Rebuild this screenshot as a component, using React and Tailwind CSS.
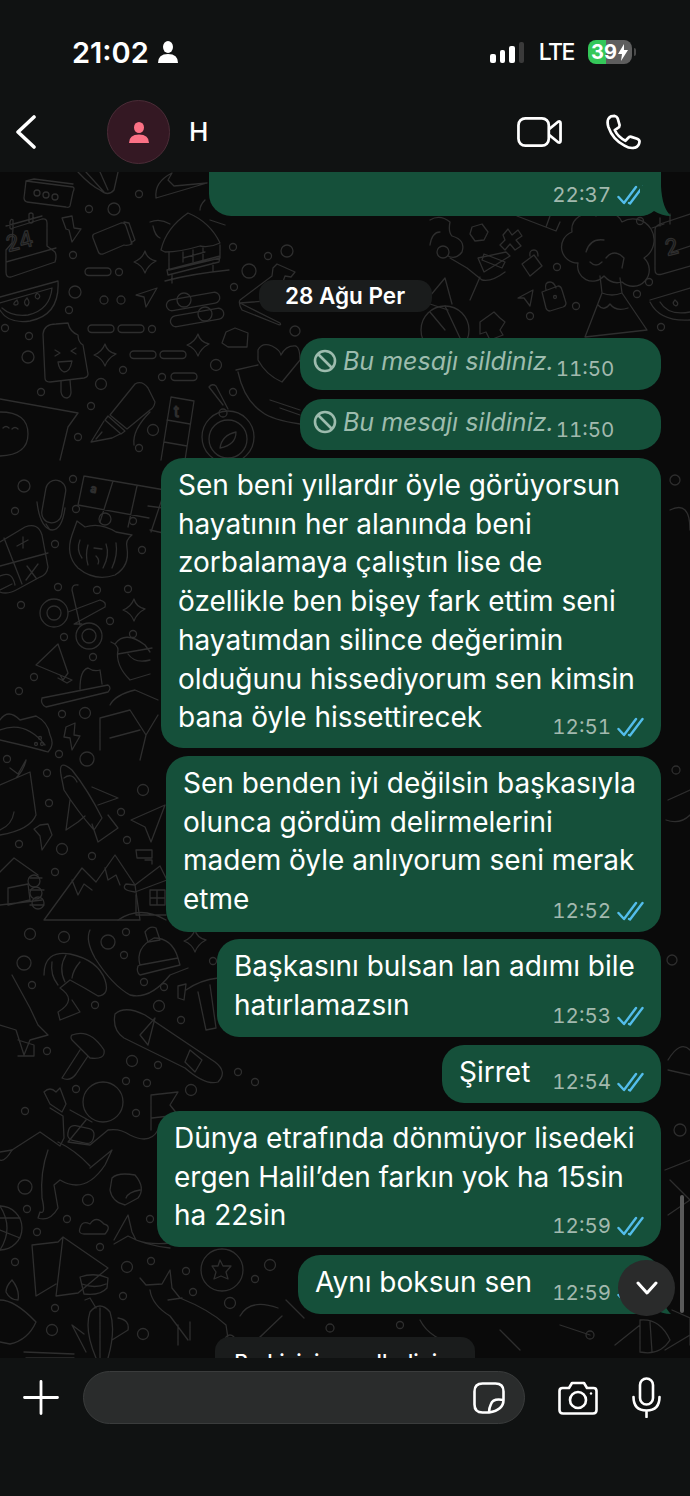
import React from 'react';

const font = { fontFamily: 'Inter, "Liberation Sans", sans-serif' };

// small rings scattered over the wallpaper: [cx, cy, r]
const rings = [
  [139, 194, 3.5], [89, 209, 3.5], [114, 209, 6], [73, 255, 3.5], [119, 272, 3.5], [233, 247, 3.5],
  [268, 256, 3.5], [287, 251, 6], [249, 271, 7], [234, 287, 3.5], [75, 292, 6], [104, 300, 4], [121, 300, 4],
  [69, 310, 3.5], [5, 328, 3.5], [29, 336, 3.5], [28, 357, 6], [152, 329, 3.5], [123, 370, 3.5], [216, 365, 5.5],
  [162, 377, 3.5], [101, 384, 5.5], [41, 392, 3.5], [233, 392, 3.5], [91, 406, 3.5], [78, 437, 3.5], [153, 430, 5.5],
  [139, 448, 3.5], [295, 331, 5], [24, 486, 6], [73, 479, 3.5], [15, 511, 3.5], [76, 509, 3.5], [105, 519, 6],
  [133, 521, 3.5], [55, 544, 3.5], [142, 550, 3.5], [58, 587, 3.5], [97, 590, 3.5], [128, 589, 3.5], [21, 605, 3.5],
  [110, 621, 3.5], [64, 637, 3.5], [133, 634, 3.5], [93, 657, 3.5], [34, 677, 3.5], [19, 691, 3.5], [62, 714, 3.5],
  [85, 713, 5.5], [59, 754, 3.5], [87, 759, 7], [7, 759, 3.5], [47, 773, 3.5], [143, 790, 5.5], [49, 803, 3.5],
  [121, 812, 3.5], [127, 840, 3.5], [19, 844, 3.5], [62, 849, 5.5], [92, 856, 3.5], [55, 872, 3.5], [30, 934, 5.5],
  [64, 937, 5.5], [108, 942, 7], [126, 932, 3.5], [124, 955, 3.5], [24, 963, 7], [32, 985, 3.5], [144, 982, 3.5],
  [164, 987, 3.5], [95, 1005, 3.5], [159, 1006, 5.5], [181, 1020, 3.5], [213, 961, 3.5], [47, 1051, 3.5],
  [132, 1061, 5.5], [158, 1065, 3.5], [238, 1072, 3.5], [126, 1081, 3.5], [147, 1083, 3.5], [255, 1082, 3.5],
  [191, 1090, 5.5], [76, 1089, 3.5], [25, 1111, 3.5], [136, 1113, 3.5], [25, 1187, 7], [88, 1200, 5.5], [27, 1209, 3.5],
  [67, 1219, 3.5], [150, 1219, 3.5], [37, 1232, 3.5], [100, 1247, 3.5], [15, 1262, 3.5], [127, 1267, 5.5],
  [151, 1261, 3.5], [186, 1271, 3.5], [255, 1279, 3.5], [270, 1265, 5.5], [193, 1292, 3.5], [230, 1303, 5.5],
  [123, 1296, 3.5], [55, 1308, 3.5], [52, 1330, 5.5], [143, 1334, 5.5], [640, 221, 3.5], [557, 267, 3.5], [576, 306, 3.5],
  [530, 316, 3.5], [649, 282, 3.5], [637, 294, 3.5], [661, 327, 3.5], [675, 480, 5], [672, 960, 5],
  [680, 1130, 6], [676, 770, 4], [230, 1340, 5], [400, 1325, 3.5], [590, 1335, 4], [330, 1328, 4],
];

// short rounded dashes: [x, y, width]
const dashes = [
  [85, 268, 26], [88, 325, 26], [118, 325, 26], [130, 351, 26], [160, 351, 26], [171, 373, 26],
];

const sparkles = [[145, 262], [105, 355], [198, 345], [134, 610], [195, 941]];

function Sparkle({ x, y }) {
  return <path d={`M${x} ${y - 11} Q${x + 2} ${y - 3} ${x + 11} ${y - 1} Q${x + 3} ${y + 3} ${x} ${y + 11} Q${x - 3} ${y + 3} ${x - 11} ${y} Q${x - 3} ${y - 3} ${x} ${y - 11}Z`} />;
}

function Wallpaper() {
  return (
    <svg className="absolute inset-0 h-full w-full" viewBox="0 172 690 1186" fill="none" stroke="#2e2e2e" strokeWidth="1.3" strokeLinecap="round" strokeLinejoin="round">
      {rings.map(([cx, cy, r], i) => <circle key={i} cx={cx} cy={cy} r={r} />)}
      {dashes.map(([x, y, w], i) => <rect key={i} x={x} y={y} width={w} height="7.5" rx="3.7" />)}
      {sparkles.map(([x, y], i) => <Sparkle key={i} x={x} y={y} />)}

      {/* keypad box, top leaf, wave */}
      <path d="M26 181 L73 187 Q75 188 73 192 L70 206 Q69 208 66 207 L27 202 Q24 201 24 198 Z M26 181 L34 179 L73 184" />
      <circle cx="37" cy="193" r="3" /><circle cx="46" cy="195" r="3" /><circle cx="55" cy="197" r="3" />
      <path d="M78 172 Q90 185 100 190 Q108 197 114 190 L118 172 M86 172 L104 192 M100 172 L108 190" />
      <path d="M156 198 Q154 182 172 173 L168 180 L174 186 L207 183 M156 198 L207 183" />
      {/* calendar */}
      <path d="M13 228 L42 219 Q47 218 47 223 L47 246 L55 252 Q57 256 55 262 L11 277 Q6 278 6 272 L6 250 L12 243 Z M6 262 L56 248" />
      <path d="M6 226 L42 216 M10 222 V228 Q11 230 13 228 V220 Q11 218 10 222 M29 214 V222 Q31 224 33 222 V214 Q31 212 29 214" />
      <text x="8" y="252" fill="none" stroke="#2e2e2e" fontSize="22" fontFamily="Inter" transform="rotate(-14 8 252)">24</text>
      {/* bolt, jar, plane */}
      <path d="M62 218 L72 216 L74 228 L81 229 L72 242 L69 230 L66 229 Z" />
      <path d="M94 234 L121 223 Q125 222 126 226 L132 244 Q127 246 124 245 L103 254 Q99 255 98 251 L93 238 Q92 235 94 234 Z M124 222 L129 223 L135 240 L131 243" />
      <path d="M136 295 L157 288 L146 307 L144 297 Z" />
      {/* hut */}
      <path d="M161 250 Q166 228 188 213 Q210 222 220 243 Q210 248 200 246 Q180 252 165 252 Z" />
      <path d="M169 252 V270 L220 258 V245 M167 270 L220 256 L219 262 L168 275 Z M172 275 V283 M213 263 V271 M165 281 Q190 274 229 270" />
      <path d="M183 252 V262 M193 250 V262 M203 248 V260 M183 258 L205 252" />
      <path d="M150 222 Q160 218 170 224 M153 226 Q155 236 160 238 M200 210 Q200 205 205 200 M210 220 L225 225" />
      {/* sliders */}
      <rect x="166" y="296" width="54" height="11" rx="5.5" transform="rotate(-10 193 301)" />
      <rect x="170" y="312" width="54" height="11" rx="5.5" transform="rotate(-10 197 317)" />
      <circle cx="184" cy="300" r="7" /><circle cx="205" cy="314" r="7" />
      {/* watermelon */}
      <path d="M0 297 L58 281 Q60 315 30 321 Q8 324 0 310 M0 303 L52 288 Q50 310 28 315 Q12 317 2 308" />
      <path d="M17 300 Q12 304 15 305 Q20 305 17 300 M27 298 Q22 303 27 306 Q31 303 27 298 M37 293 Q33 298 38 299 Q42 296 37 293" />
      {/* popsicle */}
      <path d="M43 334 Q44 324 56 324 L68 323 Q70 332 78 335 Q78 342 83 345 L88 374 Q88 377 84 378 L50 382 Q45 382 45 378 Z" />
      <path d="M61 381 V392 Q62 398 67 398 Q71 397 71 392 L70 380 M55 350 L60 353 L55 356 M76 348 L71 351 L76 354 M58 362 L72 361 Q70 372 64 372 Q59 370 58 362" />
      {/* pen */}
      <path d="M110 415 L135 384 Q142 380 148 388 L155 402 Q154 408 150 410 L127 429 Z M108 416 L125 431 L121 434 L105 420 Z M104 421 L91 442 L112 438 L120 434 M96 439 L102 432 M134 445 Q132 430 150 412" />
      {/* ruler, compass */}
      <path d="M171 397 L194 401 L185 460 M171 397 L161 460 M167 420 L190 424 M164 442 L187 446" />
      <text x="174" y="417" fill="none" stroke="#2e2e2e" fontSize="15" fontFamily="Inter">t</text>
      <circle cx="228" cy="437" r="26" /><circle cx="228" cy="439" r="19" /><circle cx="223" cy="413" r="4" />
      <path d="M223 405 L209 387 Q212 383 216 386 L228 409 M220 448 Q222 435 236 432 Q236 445 220 448" />
      {/* smiley with hanger */}
      <path d="M0 399 L78 413 L68 427 L60 460 M0 412 Q28 412 28 434 Q28 455 0 456 M3 428 Q6 425 9 428 M12 429 Q15 426 18 429" />
      {/* cone, folder, heart */}
      <path d="M277 264 L295 272 L291 277 L285 276 L280 290 L279 300 L240 303 L280 323 Q282 326 277 324 L242 310 Q238 303 240 300 L272 276 L273 268 Z" />
      <path d="M226 332 L235 328 L248 333 L247 347 L228 347 L222 343 Z" />
      <path d="M258 350 Q262 342 272 346 Q280 350 281 355 Q286 345 296 346 Q300 348 300 360 L282 382 Q266 375 258 360 Z" />
      <path d="M236 370 L258 365 M238 372 Q244 400 262 412 Q272 420 300 424 M270 400 L300 410 M280 408 L300 415" />
      {/* flower tree and volcano, top right */}
      <path d="M596 216 A17 17 0 0 1 622 222 A15 15 0 0 1 644 258 A14 14 0 0 1 622 282 Q612 285 604 276 A15 15 0 0 1 578 263 A16 16 0 0 1 572 232 A16 16 0 0 1 596 216 Z" />
      <path d="M586 252 Q590 238 604 240 M606 258 Q614 248 624 258 L622 268 M590 262 Q596 268 602 262" />
      <path d="M600 276 L602 293 Q612 297 622 293 L620 278 M602 293 L585 337 L647 330 L622 293 M598 305 Q604 312 610 304 Q616 312 628 308" />
      {/* person with phone */}
      <circle cx="443" cy="252" r="6" />
      <path d="M430 220 Q440 214 450 222 Q448 232 452 236 Q466 240 462 252 Q456 260 448 256 M430 245 Q432 232 440 232" />
      <path d="M450 258 L467 268 L482 280 Q492 282 505 272 M470 300 L480 277 M430 296 L445 278 L452 304 M430 304 L448 310 M478 258 L506 252 L510 256 L484 272 Z" />
      <path d="M484 254 L505 262 L502 268 L482 260 Z" />
      <path d="M472 227 L482 224 L488 232 L484 240 L475 241 L470 234 Z" />
      <path d="M503 235 L508 229 L512 235 L518 230 L522 236 L516 240 L521 246 L515 250 L510 244 L505 250 L500 245 L505 240 Z" />
      <path d="M522 264 L534 255 L542 266 L530 276 Z M530 256 Q529 250 534 250 Q538 250 538 256" />
      <path d="M518 298 L533 290 L530 306 L524 298 Z" />
      <path d="M542 292 L558 286 Q561 286 562 290 L566 303 Q566 306 563 307 L550 311 Q547 311 546 308 Z M546 290 Q544 282 550 282 Q554 282 556 288" />
      <circle cx="555" cy="297" r="1.5" />
      <path d="M480 322 L494 312 L500 318 L505 322 L500 330 L503 335 L490 340 L486 332 L480 334 Z" />
      <circle cx="445" cy="330" r="24" /><path d="M445 306 L460 338 M430 312 L445 330" />
      {/* book and corner calendar, melon */}
      <path d="M517 216 L556 231 L560 222 M546 227 L550 216" />
      <path d="M652 228 L664 224 M690 214 L660 224 Q655 226 655 230 L655 270 Q655 276 662 274 L690 266" />
      <path d="M660 218 V226 M670 214 V224 M672 252 L690 246" />
      <text x="667" y="256" fill="none" stroke="#2e2e2e" fontSize="22" fontFamily="Inter" transform="rotate(-14 667 256)">2</text>
      <path d="M650 300 L690 288 M650 302 Q660 322 690 320 M660 302 Q668 316 690 312" />
      <path d="M675 300 Q671 304 676 306 Q680 304 675 300" />
      {/* crossword */}
      <path d="M84 476 L165 490 L151 532 M113 481 L100 522 M137 486 L128 527 M84 476 L78 505 L149 518" />
      <path d="M148 506 L178 510 L172 535 L150 530" />
      <text x="90" y="492" fill="none" stroke="#2e2e2e" fontSize="11" fontFamily="Inter" transform="rotate(10 90 492)">a</text>
      {/* mic, cat */}
      <rect x="44" y="480" width="20" height="43" rx="10" transform="rotate(10 54 500)" />
      <path d="M37 502 Q40 528 52 530 Q62 530 65 508 M50 530 L46 524" />
      <path d="M77 521 L85 527 Q100 522 116 532 L132 535 Q125 540 127 548 Q130 566 115 575 Q95 582 78 568 Q65 555 72 535 Z" />
      <path d="M80 540 Q76 550 82 558 M88 545 Q85 555 88 565 M106 544 Q110 555 103 568 M116 543 Q118 555 112 568 M94 548 L102 549 M96 556 Q100 560 98 564" />
      {/* calculator */}
      <path d="M0 542 L25 527 Q38 522 42 535 L48 567 Q47 575 40 577 L18 589 Q8 595 0 592 M4 538 L22 584 M0 566 L48 553 M17 546 L28 540 M23 537 L23 548 M27 566 L36 578 M38 564 L26 580" />
      <path d="M0 576 Q12 570 15 585 M0 590 L12 584" />
      {/* scissors */}
      <circle cx="54" cy="613" r="14" /><circle cx="54" cy="613" r="7" /><circle cx="89" cy="636" r="13" /><circle cx="89" cy="636" r="7" />
      <path d="M68 612 L100 600 Q107 602 105 607 L74 624 L82 624 M78 585 Q72 584 72 590 L80 625" />
      {/* tube, brush, person */}
      <path d="M36 665 L58 644 L68 673 L63 680 L60 675 Z M60 675 L72 680 L67 683 L58 678" />
      <path d="M42 698 L108 685 Q112 688 108 692 L46 707 Q40 704 42 698 M80 689 Q80 670 88 668 Q94 672 100 670 L102 684" />
      <path d="M111 642 Q118 645 118 650 Q115 665 130 680 L150 674 M115 644 Q125 630 145 645 L150 652 M118 654 L152 648 M128 654 Q135 664 150 660" />
      <path d="M110 705 Q115 695 135 690 L158 700 M100 750 L100 718 L130 710 L146 735 L158 715 M110 738 L140 730 M140 760 L146 735" />
      {/* taco and bolt */}
      <path d="M0 720 Q8 708 20 720 L36 716 Q48 722 50 735 Q55 745 48 752 Q35 748 0 740 M0 730 Q25 720 45 745" />
      <path d="M66 727 L75 723 L74 735 L80 736 L72 750 L70 738 L64 737 Z" />
      <circle cx="40" cy="738" r="1.5" /><circle cx="36" cy="744" r="1.5" /><circle cx="42" cy="744" r="1.5" />
      {/* rocket */}
      <path d="M61 775 Q58 758 72 770 Q88 790 102 818 L94 830 Q78 812 64 790 Z M64 778 Q72 772 77 782 M70 800 L66 830 L78 822 L85 816 M92 787 L118 798 L98 805 M92 824 L98 842 L118 828 L108 815" />
      {/* cheek and basket fragment, plane */}
      <path d="M0 785 L30 772 L36 815 Q30 830 0 835 M0 830 Q12 825 14 812 M16 778 Q24 770 26 760 L18 774 L10 768" />
      <path d="M131 820 L165 805 L151 842 L145 827 Z" />
      <path d="M40 825 L48 824 L52 835 L42 850 L40 836 L34 829 Z" />
      {/* log cabin */}
      <path d="M0 872 L14 858 L38 875 M0 905 L42 900 M8 888 L28 884 L30 900 L8 905 Z M30 878 H42 M30 890 H44 M30 905 H44" />
      <circle cx="34" cy="881" r="6" /><circle cx="36" cy="893" r="6" /><circle cx="38" cy="903" r="6" />
      {/* mountains and house */}
      <path d="M44 920 L82 868 L96 882 L115 855 L135 885 L140 920 Z M72 880 L78 895 L84 884 L92 890 M105 868 L108 880 L116 875 L120 885" />
      <path d="M135 885 L160 866 L167 880 L135 892 Q120 890 126 884 Z M145 860 H152 V864 M137 858 H152 V850 H136 Z" />
      <path d="M136 895 V915 L166 915 M150 890 L165 890 V905 H150 Z M157 890 V905 M150 898 H165 M118 920 Q140 905 166 920" />
      {/* shrimp, beanie, snake line */}
      <path d="M44 975 Q44 950 70 954 Q98 960 105 980 Q110 995 98 996 Q85 988 70 980 L60 988 Q78 1000 58 1012 L60 1020 L80 1012 L72 1000" />
      <path d="M66 955 Q58 968 65 982 M52 962 Q50 975 58 985 M80 962 Q73 970 72 978" />
      <path d="M90 930 Q85 940 95 958 Q112 985 130 995 Q150 1000 170 975 L188 968" />
      <path d="M140 965 Q135 948 154 938 Q172 938 178 958 L180 965 L140 975 Q136 972 138 966 Z M140 965 L178 958" />
      <path d="M145 932 Q150 925 156 928 L160 940 L148 942 Z" />
      {/* hammer and snowboard */}
      <path d="M178 986 L186 984 L184 1000 L178 998 Z M186 990 Q200 980 218 978 M198 992 L206 1030 L216 1028 L210 985" />
      <path d="M115 1014 Q125 1005 145 1015 L215 1062 Q228 1072 218 1082 Q206 1086 185 1068 L124 1038 Q112 1030 115 1014 Z" />
      <path d="M140 1035 L155 1018 L148 1045 Z M190 1050 L202 1060 L195 1072 L185 1062 Z" />
      {/* tree, mushroom */}
      <path d="M12 975 L30 1008 L38 1025 L48 1035 L30 1040 L24 1055 L16 1030 L0 1025 M18 1040 L34 1045 L34 1056 L18 1056" />
      <path d="M72 1035 Q90 1028 104 1050 Q106 1060 90 1058 L72 1040 Q70 1037 72 1035 M80 1050 L62 1078 Q70 1082 76 1074 L88 1056" />
      {/* astronaut */}
      <circle cx="103" cy="1102" r="20" />
      <path d="M44 1092 Q50 1086 56 1092 L60 1088 L63 1096 L66 1104 L62 1112 L50 1104 Z M50 1108 L63 1116 L64 1138 L60 1146 L40 1132 L12 1150 L0 1152" />
      <path d="M86 1120 L68 1142 L90 1145 L108 1130 Q120 1128 130 1135 Q150 1145 158 1130 M92 1122 L70 1110" />
      <rect x="68" y="1127" width="26" height="15" rx="6" transform="rotate(12 81 1134)" />
      <path d="M48 1150 Q40 1172 42 1198 Q46 1215 40 1212 L38 1218 Q50 1222 58 1208 L54 1185 L60 1180 Q85 1195 105 1165 L112 1150 L90 1168" />
      <path d="M12 1150 Q5 1162 0 1160 M58 1142 Q75 1150 90 1166" />
      {/* flag, diaper, globe */}
      <path d="M151 1130 V1095 L178 1092 L170 1105 L178 1115 L152 1118" />
      <path d="M112 1178 Q118 1172 135 1175 Q146 1188 138 1198 L125 1205 Q112 1202 110 1190 Z M126 1198 Q128 1192 140 1190" />
      <circle cx="0" cy="1228" r="22" /><path d="M0 1206 Q14 1228 0 1250 M-15 1218 L20 1218 M0 1230 L20 1238" />
      {/* whale tail, cloud, cone */}
      <path d="M114 1240 L128 1215 L132 1232 L136 1240 Q150 1245 170 1243 M114 1244 L128 1236 Q144 1245 170 1248" />
      <path d="M80 1228 Q82 1220 90 1224 Q96 1215 104 1224 Q112 1226 105 1234 H84 Q78 1234 80 1228 Z" />
      <path d="M32 1245 L58 1242 L63 1237 L108 1268 L78 1293 L56 1296 L63 1237 M32 1245 L36 1296 L56 1284" />
      <path d="M80 1277 Q95 1272 108 1278 L107 1288 Q100 1296 84 1294 Z M82 1284 Q95 1289 106 1284" />
      {/* star coin, fox, cactus, candle */}
      <circle cx="222" cy="1270" r="21" /><path d="M220 1260 L223 1266 L231 1266 L226 1272 L228 1279 L221 1276 L214 1279 L216 1272 L212 1266 L218 1266 Z" />
      <path d="M140 1278 L146 1285 L162 1284 L170 1270 L172 1288 L180 1298 Q210 1310 226 1325 L229 1345 M150 1290 Q152 1305 170 1316 L188 1340 M168 1300 L182 1298 M178 1325 L178 1345 M190 1322 V1340" />
      <path d="M0 1300 Q15 1300 36 1322 Q28 1340 10 1344 L0 1342 M12 1280 Q20 1290 18 1300 Q10 1300 6 1292 Q6 1286 12 1280" />
      <path d="M85 1300 L90 1298 L96 1308 M96 1358 Q84 1330 90 1312 Q100 1300 110 1312 Q116 1330 108 1358 M100 1308 V1358 M118 1318 Q130 1320 128 1330 L112 1340 M84 1334 L72 1325 L86 1352" />
      <path d="M24 1352 L74 1354 M26 1358 L74 1358" />
      {/* lower middle and right edge bits */}
      <path d="M240 1316 Q250 1298 278 1308 M238 1358 L282 1316 M286 1300 L304 1318" />
      <path d="M420 1320 Q430 1340 460 1345 M500 1330 L520 1350 M560 1325 L590 1335 M615 1345 L640 1325 M640 1320 Q660 1318 670 1340 Q660 1356 640 1352 Z M650 1322 L652 1352" />
      <path d="M665 1350 L690 1335 M672 1310 L690 1318 V1345" />
      <path d="M670 510 Q690 500 690 530 M668 800 L690 790 M666 820 Q680 825 690 815 M668 1070 L690 1075 M668 1060 Q680 1040 690 1050 M665 1170 L690 1160 M670 1180 L690 1200 L668 1215" />
    </svg>
  );
}

function Checks() {
  return (
    <svg className="ml-[6px] h-[20px] w-[27px] shrink-0" viewBox="0 0 27 20" fill="none" stroke="#53bdeb" strokeWidth="2.4" strokeLinecap="round" strokeLinejoin="round">
      <path d="M1.5 12 L7 18 L19 2" />
      <path d="M12 18 L13 18.5 L25.5 2" />
    </svg>
  );
}

function Meta({ time, className }) {
  return (
    <div className={`flex h-[20px] items-center justify-end pr-[17px] ${className}`}>
      <span className="text-[20.5px] leading-none tabular-nums text-[#a2b9ae]">{time}</span>
      <Checks />
    </div>
  );
}

function Tail() {
  return (
    <svg className="absolute right-[-19px] bottom-0 h-[30px] w-[40px]" viewBox="0 0 40 30" fill="#15503a">
      <path d="M0 0 H21 Q22 22 31 30 Q22 30 14 25 Q8 30 0 30 Z" />
    </svg>
  );
}

function Bubble({ className, lines, time, tail }) {
  return (
    <div className={`relative mr-[29px] flex shrink-0 flex-col rounded-[22px] bg-[#15503a] pt-[8px] pb-[11px] pl-[17px] text-[28px] leading-[38.7px] text-white ${className}`}>
      <div className="-mb-[40px]">
        {lines.map((line, i) => <div key={i} className="whitespace-nowrap">{line}</div>)}
      </div>
      <Meta time={time} className="mt-auto" />
      {tail && <Tail />}
    </div>
  );
}

function Deleted({ className }) {
  return (
    <div className={`relative mr-[29px] flex w-[361px] shrink-0 items-start rounded-[22px] bg-[#15503a] pt-[11px] pl-[13px] ${className}`}>
      <svg className="h-[24px] w-[24px] shrink-0" viewBox="0 0 24 24" fill="none" stroke="#9dbcae" strokeWidth="2.6">
        <circle cx="12" cy="12" r="10" />
        <path d="M5 5 L19 19" />
      </svg>
      <span className="ml-[6px] text-[25px] italic leading-[24px] text-[#9dbcae]">Bu mesajı sildiniz.</span>
      <span className="ml-[2px] mt-[10px] text-[20.5px] leading-[20px] tabular-nums text-[#a2b9ae]">11:50</span>
    </div>
  );
}

export default function App() {
  return (
    <div className="flex h-[1496px] w-[690px] flex-col overflow-hidden bg-[#101212]" style={font}>
      <header className="h-[172px] shrink-0 bg-[#101212] text-white">
        <div className="flex h-[100px] items-center pt-[4px] pr-[54px] pl-[72px]">
          <span className="text-[29px] font-semibold leading-none">21:02</span>
          <svg className="ml-[9px] h-[22px] w-[20px]" viewBox="0 0 20 22" fill="#fff">
            <ellipse cx="10" cy="6" rx="5" ry="6" />
            <path d="M0 22 Q0 13 10 13 Q20 13 20 22 Z" />
          </svg>
          <div className="ml-auto flex items-end gap-[4px]">
            <div className="h-[9px] w-[6px] rounded-[2px] bg-white" />
            <div className="h-[13px] w-[5px] rounded-[2px] bg-white" />
            <div className="h-[17px] w-[6px] rounded-[2px] bg-white" />
            <div className="h-[21px] w-[5px] rounded-[2px] bg-[#3a3a3a]" />
          </div>
          <span className="ml-[15px] text-[23px] font-medium leading-none tracking-[-1.5px]">LTE</span>
          <div className="ml-[14px] flex h-[24px] w-[44px] items-center rounded-[8px] bg-[linear-gradient(90deg,#34c759_41%,#5e5e5e_41%)] pl-[3px] text-[20px] font-bold leading-none">
            39
            <svg className="ml-[1px] h-[17px] w-[10px]" viewBox="0 0 10 17" fill="#fff">
              <path d="M6 0 L0 10 H4 L3 17 L10 6 H6 Z" />
            </svg>
          </div>
          <div className="ml-[2px] h-[8px] w-[2px] rounded-r-[2px] bg-[#4a4a4a]" />
        </div>
        <div className="flex h-[64px] items-center pr-[49px] pl-[15px]">
          <svg className="h-[34px] w-[22px]" viewBox="0 0 22 34" fill="none" stroke="#fff" strokeWidth="3.6" strokeLinecap="round" strokeLinejoin="round">
            <path d="M19 2 L3 17 L19 32" />
          </svg>
          <div className="ml-[70px] flex h-[64px] w-[63px] items-center justify-center rounded-full border border-[#4a2c37] bg-[#341823]">
            <svg className="h-[21px] w-[20px]" viewBox="0 0 20 21" fill="#fb7185">
              <ellipse cx="10" cy="5.5" rx="5" ry="5.5" />
              <path d="M0 21 Q0 12.5 10 12.5 Q20 12.5 20 21 Z" />
            </svg>
          </div>
          <span className="ml-[19px] text-[26px] font-medium leading-none">H</span>
          <svg className="ml-auto h-[32px] w-[45px]" viewBox="0 0 46 32" fill="none" stroke="#fff" strokeWidth="2.8" strokeLinejoin="round">
            <rect x="1.5" y="2" width="31" height="28" rx="7" />
            <path d="M33 13 L42 5.5 Q44.5 4.5 44.5 7 V25 Q44.5 27.5 42 26.5 L33 19" />
          </svg>
          <svg className="ml-[44px] h-[36px] w-[35px]" viewBox="0 0 36 36" fill="none" stroke="#fff" strokeWidth="2.8" strokeLinejoin="round">
            <path d="M5 2 L9 1.5 Q11 2 12 4 L14 11 Q14 13 12 14 L9 16 Q12 23 20 27 L23 24 Q24 22.5 26 23 L32 25 Q34.5 26 34.5 28 Q34 33 30 34 Q25 35.5 19 32 Q7 26 2.5 13 Q0 5 5 2 Z" />
          </svg>
        </div>
      </header>

      <main className="relative flex min-h-0 flex-1 flex-col items-end overflow-hidden bg-[#0a0a0a]">
        <Wallpaper />
        <div className="relative mr-[29px] flex h-[44px] w-[452px] shrink-0 items-end rounded-b-[22px] bg-[#15503a] pb-[11px]">
          <Meta time="22:37" className="w-full" />
          <Tail />
        </div>
        <div className="relative mt-[64px] flex h-[32px] w-[173px] shrink-0 items-center justify-center self-center rounded-[14px] bg-[#1a1c1c] text-[22.5px] font-semibold leading-none text-white">
          28 Ağu Per
        </div>
        <Deleted className="mt-[26px] h-[52px]" />
        <Deleted className="mt-[9px] h-[51px]" />
        <Bubble
          className="mt-[8px] h-[290px] w-[500px]"
          time="12:51"
          lines={[
            'Sen beni yıllardır öyle görüyorsun',
            'hayatının her alanında beni',
            'zorbalamaya çalıştın lise de',
            'özellikle ben bişey fark ettim seni',
            'hayatımdan silince değerimin',
            'olduğunu hissediyorum sen kimsin',
            'bana öyle hissettirecek',
          ]}
        />
        <Bubble
          className="mt-[8px] h-[176px] w-[495px]"
          time="12:52"
          lines={[
            'Sen benden iyi değilsin başkasıyla',
            'olunca gördüm delirmelerini',
            'madem öyle anlıyorum seni merak',
            'etme',
          ]}
        />
        <Bubble
          className="mt-[7px] h-[98px] w-[444px]"
          time="12:53"
          lines={['Başkasını bulsan lan adımı bile', 'hatırlamazsın']}
        />
        <Bubble className="mt-[8px] h-[58px] w-[219px]" time="12:54" lines={['Şirret']} />
        <Bubble
          className="mt-[8px] h-[136px] w-[504px]"
          time="12:59"
          lines={['Dünya etrafında dönmüyor lisedeki', 'ergen Halil’den farkın yok ha 15sin', 'ha 22sin']}
        />
        <Bubble className="mt-[8px] h-[59px] w-[363px]" time="12:59" lines={['Aynı boksun sen']} tail />
        <div className="relative mt-[23px] h-[40px] w-[260px] shrink-0 self-center rounded-[14px] bg-[#1a1c1c] pt-[15px] text-center text-[21.5px] font-medium leading-none whitespace-nowrap text-white">
          Bu kişiyi engellediniz.
        </div>

        {/* scrollbar and scroll-to-bottom sit over the messages */}
        <div className="absolute top-[1023px] right-[6px] h-[118px] w-[4px] rounded-full bg-[#5a5a5a]" />
        <div className="absolute top-[1088px] right-[15px] flex h-[56px] w-[57px] items-center justify-center rounded-full bg-[#2a2b2b]">
          <svg className="h-[14px] w-[22px]" viewBox="0 0 22 14" fill="none" stroke="#fff" strokeWidth="3" strokeLinecap="round" strokeLinejoin="round">
            <path d="M2 2 L11 12 L20 2" />
          </svg>
        </div>
      </main>

      <footer className="relative h-[138px] shrink-0 bg-[#101212] pt-[13px]">
        <div className="flex h-[53px] items-center">
          <svg className="ml-[23px] h-[35px] w-[36px]" viewBox="0 0 36 35" fill="none" stroke="#fff" strokeWidth="2.8" strokeLinecap="round">
            <path d="M18 1.5 V33.5 M1.5 17.5 H34.5" />
          </svg>
          <div className="ml-[24px] flex h-[53px] w-[442px] items-center justify-end rounded-full border border-[#3a3c3c] bg-[#2a2c2c] pr-[19px]">
            <svg className="h-[32px] w-[32px]" viewBox="0 0 32 32" fill="none" stroke="#fff" strokeWidth="2.6" strokeLinejoin="round">
              <path d="M30.5 18 V9.5 Q30.5 1.5 22.5 1.5 H9.5 Q1.5 1.5 1.5 9.5 V22.5 Q1.5 30.5 9.5 30.5 H16 Q30.5 28 30.5 18 Z" />
              <path d="M30.5 18 Q20 16 18 22 Q16 26 16 30.5" />
            </svg>
          </div>
          <svg className="ml-[33px] h-[34px] w-[40px]" viewBox="0 0 40 34" fill="none" stroke="#fff" strokeWidth="2.6" strokeLinejoin="round">
            <path d="M4.5 7 H11 L14 2 H26 L29 7 H35.5 Q38.5 7 38.5 10 V29 Q38.5 32.5 35 32.5 H5 Q1.5 32.5 1.5 29 V10 Q1.5 7 4.5 7 Z" />
            <circle cx="20" cy="19" r="8" />
            <circle cx="33" cy="12.5" r="1.2" fill="#fff" stroke="none" />
          </svg>
          <svg className="ml-[34px] h-[41px] w-[29px]" viewBox="0 0 29 41" fill="none" stroke="#fff" strokeWidth="2.6" strokeLinecap="round">
            <rect x="8" y="1.5" width="13" height="26" rx="6.5" />
            <path d="M1.5 20 Q1.5 33.5 14.5 33.5 Q27.5 33.5 27.5 20 M14.5 33.5 V40" />
          </svg>
        </div>
      </footer>
    </div>
  );
}
